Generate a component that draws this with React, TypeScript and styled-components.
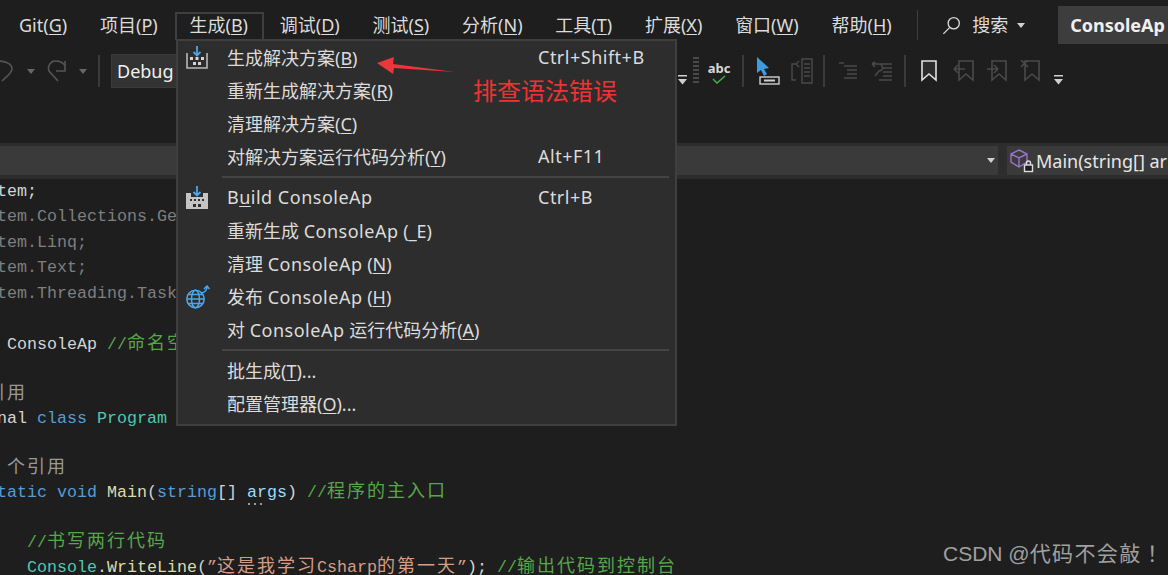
import React from 'react';

import styled, { createGlobalStyle } from 'styled-components';

const UI_FONT = `'Noto Sans', 'Noto Sans CJK SC', sans-serif`;
const CODE_FONT = `'Liberation Mono', 'Noto Sans CJK SC', monospace`;

const MENUS = [
  ['Git(', 'G', ')'],
  ['项目(', 'P', ')'],
  ['生成(', 'B', ')'],
  ['调试(', 'D', ')'],
  ['测试(', 'S', ')'],
  ['分析(', 'N', ')'],
  ['工具(', 'T', ')'],
  ['扩展(', 'X', ')'],
  ['窗口(', 'W', ')'],
  ['帮助(', 'H', ')'],
];

const App: React.FC = () => {
  return (
    <Root>
      <GlobalStyle />
      <MenuBar>
        {MENUS.map(([before, key, after]) => (
          <MenuLabel key={key} $open={key === 'B'}>
            {before}
            <u>{key}</u>
            {after}
          </MenuLabel>
        ))}
        <MenuDivider />
        <SearchBox>
          <svg width="19" height="19" viewBox="0 0 17 17" fill="none" stroke="#d8d8d8" strokeWidth="1.2">
            <circle cx="10.5" cy="6.5" r="5" />
            <path d="M7 10.2L1.2 16" />
          </svg>
          <SearchText>搜索</SearchText>
          <Caret $color="#d0d0d0" />
        </SearchBox>
        <TitleBox>ConsoleAp</TitleBox>
      </MenuBar>

      <Toolbar>
        <ToolGroup>
          <svg width="13" height="26" viewBox="0 0 13 26" fill="none" stroke="#555" strokeWidth="1.6">
            <path d="M-3 3C4 3 12 5 12 11C12 15 5 20 2 23" />
          </svg>
          <Caret $color="#666" $gap={14} />
          <ToolIcon $gap={12} width="22" height="26" viewBox="0 0 22 26" fill="none" stroke="#555" strokeWidth="1.6">
            <path d="M11 23L2 13C0 8 4 3 8 3C12 3 16 4 18 8" />
            <path d="M18 3V13H9" />
          </ToolIcon>
          <Caret $color="#666" $gap={10} />
          <ToolSep $gap={11} />
          <ConfigCombo>Debug</ConfigCombo>
        </ToolGroup>

        <ToolGroup>
          <OverflowIcon />
          <ToolIcon $gap={5} width="8" height="30" viewBox="0 0 8 30" fill="#4a4a4a">
            {[1, 5, 9, 13, 17, 21, 25].map((y) => (
              <rect key={y} x="1" y={y} width="6" height="2" />
            ))}
          </ToolIcon>
          <AbcIcon>
            <AbcText>abc</AbcText>
            <svg width="14" height="9" viewBox="0 0 14 9" fill="none" stroke="#4caf50" strokeWidth="1.4">
              <path d="M1 4l4 4 8-7" />
            </svg>
          </AbcIcon>
          <ToolSep $gap={13} />
          <ToolIcon $gap={12} width="24" height="28" viewBox="0 0 24 28">
            <path d="M1 0l0 16 4-3 3 6 3-2-3-5 5-1z" fill="#3e9be0" />
            <rect x="4" y="20" width="19" height="7" fill="none" stroke="#cfcfcf" strokeWidth="1.4" />
            <rect x="8" y="22.5" width="11" height="2" fill="#cfcfcf" />
          </ToolIcon>
          <ToolIcon $gap={10} width="23" height="26" viewBox="0 0 23 26" fill="none" stroke="#4a4a4a" strokeWidth="1.4">
            <path d="M6 6H2v16h4M6 6l3-3M6 6l3 3" />
            <path d="M12 1h10v24H12zM14 6h6M14 10h6M14 14h6M14 18h6" />
          </ToolIcon>
          <ToolSep $gap={10} />
          <ToolIcon $gap={14} width="19" height="20" viewBox="0 0 19 20" stroke="#4a4a4a" strokeWidth="1.6">
            <path d="M0 2h5M5 5h13M8 9h10M8 13h10M5 17h13" />
          </ToolIcon>
          <ToolIcon $gap={12} width="23" height="21" viewBox="0 0 23 21" fill="none" stroke="#4a4a4a" strokeWidth="1.6">
            <path d="M2 3h7a3 3 0 0 1 0 7L5 15M2 3l3-2M2 3l3 3" />
            <path d="M10 3h12M13 7h9M13 11h9M13 15h9M9 19h13" />
          </ToolIcon>
          <ToolSep $gap={11} />
          <BookmarkIcon $color="#e0e0e0" $gap={15} $fill="#2c2c2c" />
          <BookmarkIcon $color="#4a4a4a" $gap={16} $mark="M-4 9h11M-4 9l4-4M-4 9l4 4" $wide />
          <BookmarkIcon $color="#4a4a4a" $gap={12} $mark="M-4 9h11M7 9l-4-4M7 9l-4 4" $wide />
          <BookmarkIcon $color="#4a4a4a" $gap={12} $mark="M-3 0l7 7M4 0l-7 7" $wide />
          <OverflowIcon $gap={14} />
        </ToolGroup>
      </Toolbar>

      <NavBar>
        <NavCombo $grow>
          <Caret $color="#d0d0d0" />
        </NavCombo>
        <NavCombo>
          <NavIcon width="24" height="24" viewBox="0 0 24 24" fill="none" strokeWidth="1.4">
            <path d="M9 1l8 4v8l-8 5-8-5V5zM1 5l8 4 8-4M9 9v9" stroke="#9a72c9" />
            <rect x="14.5" y="16" width="8" height="6.5" fill="#1e1e1e" stroke="#ddd" />
            <path d="M16.5 16v-2a2 2 0 0 1 4 0v2" stroke="#ddd" />
          </NavIcon>
          <NavText>Main(string[] ar</NavText>
        </NavCombo>
      </NavBar>

      <Editor>
        <Line $h={25}><Dim $bright>tem;</Dim></Line>
        <Line $h={25.5}><Dim>tem.Collections.Ge</Dim></Line>
        <Line $h={25.5}><Dim>tem.Linq;</Dim></Line>
        <Line $h={25.5}><Dim>tem.Text;</Dim></Line>
        <Line $h={25.5}><Dim>tem.Threading.Task</Dim></Line>
        <Line $h={25.5} />
        <Line $h={25.5}>{' '}<Ident>ConsoleAp</Ident> <Comment>//<Cjk>命名空</Cjk></Comment></Line>
        <Line $h={24.5} />
        <Line $h={24.5} $lens $x={-10}>引用</Line>
        <Line $h={25}>nal <Keyword>class</Keyword> <TypeName>Program</TypeName></Line>
        <Line $h={24.5} />
        <Line $h={24} $lens $x={10}>个引用</Line>
        <Line $h={24.500}>
          <Keyword>tatic void</Keyword> <Method>Main</Method>(<Keyword>string</Keyword>[] <Param>args</Param>) <Comment>//<Cjk>程序的主入口</Cjk></Comment>
        </Line>
        <Line $h={25.5} />
        <Line $h={25.5} $x={30}><Comment>//<Cjk>书写两行代码</Cjk></Comment></Line>
        <Line $h={25} $x={30}>
          <TypeName>Console</TypeName>.<Method>WriteLine</Method>(<Str>”<Cjk>这是我学习</Cjk>Csharp<Cjk>的第一天</Cjk>”</Str>); <Comment>//<Cjk>输出代码到控制台</Cjk></Comment>
        </Line>
      </Editor>

      <MenuPanel>
        <MenuItem>
          <ItemIcon><BuildIcon /></ItemIcon>
          <ItemLabel>生成解决方案(<u>B</u>)</ItemLabel>
          <Shortcut>Ctrl+Shift+B</Shortcut>
        </MenuItem>
        <MenuItem>
          <ItemIcon />
          <ItemLabel>重新生成解决方案(<u>R</u>)</ItemLabel>
        </MenuItem>
        <MenuItem>
          <ItemIcon />
          <ItemLabel>清理解决方案(<u>C</u>)</ItemLabel>
        </MenuItem>
        <MenuItem>
          <ItemIcon />
          <ItemLabel>对解决方案运行代码分析(<u>Y</u>)</ItemLabel>
          <Shortcut>Alt+F11</Shortcut>
        </MenuItem>
        <Separator />
        <MenuItem>
          <ItemIcon><BuildIcon $solid /></ItemIcon>
          <ItemLabel>
            <Latin>B<u>u</u>ild ConsoleAp</Latin>
          </ItemLabel>
          <Shortcut>Ctrl+B</Shortcut>
        </MenuItem>
        <MenuItem>
          <ItemIcon />
          <ItemLabel>重新生成 <Latin>ConsoleAp</Latin> (<u>_</u>E)</ItemLabel>
        </MenuItem>
        <MenuItem>
          <ItemIcon />
          <ItemLabel>清理 <Latin>ConsoleAp</Latin> (<u>N</u>)</ItemLabel>
        </MenuItem>
        <MenuItem>
          <ItemIcon>
            <svg width="24" height="24" viewBox="0 0 24 24" fill="none" stroke="#4ea6ea" strokeWidth="1.5">
              <circle cx="9.5" cy="14" r="8.7" />
              <ellipse cx="9.5" cy="14" rx="4" ry="8.7" />
              <path d="M1 14h17M2.500 9.500h14M2.500 18.500h14" />
              <path d="M16 8c3-1 5-3 5-6M18 4l3-3 2.500 3" />
            </svg>
          </ItemIcon>
          <ItemLabel>发布 <Latin>ConsoleAp</Latin> (<u>H</u>)</ItemLabel>
        </MenuItem>
        <MenuItem>
          <ItemIcon />
          <ItemLabel>对 <Latin>ConsoleAp</Latin> 运行代码分析(<u>A</u>)</ItemLabel>
        </MenuItem>
        <Separator />
        <MenuItem>
          <ItemIcon />
          <ItemLabel>批生成(<u>T</u>)...</ItemLabel>
        </MenuItem>
        <MenuItem>
          <ItemIcon />
          <ItemLabel>配置管理器(<u>O</u>)...</ItemLabel>
        </MenuItem>
      </MenuPanel>

      <ArrowMark width="80" height="20" viewBox="0 0 80 20">
        <path d="M0 6L17 0l-1 7 62 8-61-4-1 6z" fill="#f1343a" />
      </ArrowMark>
      <Annotation>排查语法错误</Annotation>
      <Watermark>CSDN @<WatermarkCjk>代码不会敲！</WatermarkCjk></Watermark>
    </Root>
  );
};
export default App;

const BuildIcon: React.FC<{ $solid?: boolean }> = ({ $solid }) => (
  <svg width="22" height="24" viewBox="0 0 22 24">
    <path d="M11 0v9M7.5 6l3.5 3.5L14.500 6" fill="none" stroke="#4ea6ea" strokeWidth="1.8" />
    {$solid ? (
      <>
        <path d="M0 7h5v4h12V7h5v16H0z" fill="#c4c4c4" />
        <path d="M4 13h2v2H4zM8 13h2v2H8zM12 13h2v2h-2zM16 13h2v2h-2zM7 18h3v3H7zM12 18h3v3h-3z" fill="#2d2d2d" />
      </>
    ) : (
      <>
        <path d="M1 7v15h20V7" fill="none" stroke="#b8b8b8" strokeWidth="1.6" />
        <path d="M4 11h3v3H4zM9.500 11h3v3h-3zM15 11h3v3h-3zM7 16h3v3H7zM12 16h3v3h-3z" fill="#d4d4d4" />
      </>
    )}
  </svg>
);

const OverflowIcon: React.FC<{ $gap?: number }> = ({ $gap = 0 }) => (
  <OverflowSvg $gap={$gap} width="9" height="10" viewBox="0 0 9 10">
    <rect x="0" y="0" width="9" height="1.500" fill="#d0d0d0" />
    <path d="M0 4h9L4.500 9.500z" fill="#d0d0d0" />
  </OverflowSvg>
);

const BookmarkIcon: React.FC<{
  $color: string;
  $gap: number;
  $fill?: string;
  $mark?: string;
  $wide?: boolean;
}> = ({ $color, $gap, $fill = 'none', $mark, $wide }) => (
  <ToolIcon
    $gap={$gap}
    width={$wide ? 21 : 16}
    height="22"
    viewBox={$wide ? '-5 0 21 22' : '0 0 16 22'}
    fill="none"
    stroke={$color}
    strokeWidth="1.6"
  >
    <path d="M1 1h14v19l-7-6-7 6z" fill={$fill} />
    {$mark && <path d={$mark} />}
  </ToolIcon>
);

/* ===== styled-components ===== */
const GlobalStyle = createGlobalStyle`
  html, body {
    margin: 0;
    padding: 0;
    background: #1e1e1e;
  }
  u {
    text-underline-offset: 2px;
    text-decoration-thickness: 1px;
  }
`;

const Root = styled.div`
  position: relative;
  width: 1168px;
  height: 575px;
  overflow: hidden;
  background: #1e1e1e;
  font-family: ${UI_FONT};
  color: #dcdcdc;
`;

const MenuBar = styled.div`
  height: 50px;
  display: flex;
  align-items: center;
  padding-left: 19px;
  font-size: 18px;
  white-space: nowrap;
`;

const MenuLabel = styled.span<{ $open?: boolean }>`
  position: relative;
  margin-right: 32.8px;
  line-height: 24px;

  ${(p) =>
    p.$open &&
    `
    margin-left: -1px;
    margin-right: 31.8px;

    &:before {
      content: '';
      position: absolute;
      left: -14px;
      right: -16px;
      top: -1px;
      height: 26px;
      border: 2px solid #3f3f41;
      border-bottom: 0;
    }
  `}
`;

const MenuDivider = styled.div`
  width: 1px;
  height: 30px;
  margin: 0 24px 0 -7px;
  background: #3f3f41;
`;

const SearchBox = styled.div`
  display: flex;
  align-items: center;
  margin-right: 33px;
`;

const SearchText = styled.span`
  margin: 0 9px 0 11px;
  line-height: 24px;
`;

const TitleBox = styled.div`
  height: 38px;
  width: 130px;
  padding-left: 12px;
  display: flex;
  align-items: center;
  font-weight: 700;
  background: #3d3d3d;
  color: #f0f0f0;
`;

const Caret = styled.span<{ $color: string; $gap?: number }>`
  width: 0;
  height: 0;
  margin-left: ${(p) => p.$gap ?? 0}px;
  border-left: 4.500px solid transparent;
  border-right: 4.500px solid transparent;
  border-top: 5px solid ${(p) => p.$color};
`;

const Toolbar = styled.div`
  height: 38px;
  margin-top: 2px;
  display: flex;
  justify-content: space-between;
  align-items: center;
  padding-right: 105px;
`;

const ToolGroup = styled.div`
  display: flex;
  align-items: center;
`;

const ToolIcon = styled.svg<{ $gap: number }>`
  margin-left: ${(p) => p.$gap}px;
  flex-shrink: 0;
`;

const ToolSep = styled.div<{ $gap: number }>`
  width: 2px;
  height: 32px;
  margin-left: ${(p) => p.$gap}px;
  background: #3a3a3a;
`;

const ConfigCombo = styled.div`
  width: 200px;
  height: 34px;
  margin-left: 11px;
  padding-left: 5px;
  box-sizing: border-box;
  display: flex;
  align-items: center;
  background: #333333;
  border: 1px solid #3a3a3a;
  font-size: 18px;
  color: #f0f0f0;
`;

const OverflowSvg = styled.svg<{ $gap: number }>`
  margin-left: ${(p) => p.$gap}px;
  align-self: flex-end;
  margin-bottom: 2px;
`;

const AbcIcon = styled.div`
  width: 20px;
  margin-left: 9px;
  padding-top: 2px;
  display: flex;
  flex-direction: column;
  align-items: center;
`;

const AbcText = styled.span`
  font-size: 13px;
  line-height: 14px;
  font-weight: 700;
  color: #d8d8d8;
`;

const NavBar = styled.div`
  height: 36px;
  margin-top: 53px;
  padding: 3px 0 4px;
  box-sizing: border-box;
  display: flex;
  gap: 9px;
  background: #2d2d2d;
`;

const NavCombo = styled.div<{ $grow?: boolean }>`
  flex: ${(p) => (p.$grow ? '0 0 998px' : '1')};
  min-width: 0;
  padding: ${(p) => (p.$grow ? '0 3px 0 0' : '0 0 0 3px')};
  box-sizing: border-box;
  display: flex;
  align-items: center;
  justify-content: ${(p) => (p.$grow ? 'flex-end' : 'flex-start')};
  background: #3a3a3a;
  overflow: hidden;
  white-space: nowrap;
`;

const NavIcon = styled.svg`
  flex-shrink: 0;
`;

const NavText = styled.span`
  margin-left: 2px;
  font-size: 18px;
  color: #e6e6e6;
`;

const Editor = styled.div`
  margin-left: -3px;
  font-family: ${CODE_FONT};
  font-size: 16.670px;
  color: #d4d4d4;
  white-space: pre;
`;

const Line = styled.div<{ $h: number; $x?: number; $lens?: boolean }>`
  height: ${(p) => p.$h}px;
  line-height: ${(p) => p.$h}px;
  margin-left: ${(p) => p.$x ?? 0}px;
  ${(p) => p.$lens && 'font-size: 18px; letter-spacing: 2px; color: #999999;'}
`;

const Dim = styled.span<{ $bright?: boolean }>`
  color: ${(p) => (p.$bright ? '#d4d4d4' : '#7f7f7f')};
`;

const Ident = styled.span`
  color: #d4d4d4;
`;

const Keyword = styled.span`
  color: #569cd6;
`;

const TypeName = styled.span`
  color: #4ec9b0;
`;

const Method = styled.span`
  color: #dcdcaa;
`;

const Param = styled.span`
  color: #9cdcfe;
  position: relative;

  &:after {
    content: '';
    position: absolute;
    left: 1px;
    bottom: -3px;
    width: 14px;
    height: 2px;
    background: repeating-linear-gradient(90deg, #9a9a9a 0 2px, transparent 2px 6px);
  }
`;

const Comment = styled.span`
  color: #57a64a;
`;

const Str = styled.span`
  color: #d69d85;
`;

const Cjk = styled.span`
  font-size: 18px;
  letter-spacing: 2px;
`;

const MenuPanel = styled.div`
  position: absolute;
  left: 176px;
  top: 39px;
  width: 501px;
  height: 387px;
  box-sizing: border-box;
  border: 2px solid #3f3f41;
  background: #2d2d2d;
  font-size: 18px;
`;

const MenuItem = styled.div`
  height: 33px;
  display: flex;
  align-items: center;
  white-space: nowrap;
  color: #dcdcdc;
`;

const ItemIcon = styled.div`
  width: 49px;
  padding-left: 8px;
  box-sizing: border-box;
  display: flex;
  align-items: center;
`;

const ItemLabel = styled.span`
  width: 311px;
  padding-bottom: 1px;
`;

const Latin = styled.span`
  letter-spacing: 0.5px;
`;

const Shortcut = styled.span`
  padding-bottom: 1px;
  letter-spacing: 0.5px;
  color: #dcdcdc;
`;

const Separator = styled.div`
  height: 2px;
  margin: 3px 6px 3px 44px;
  background: #444446;
`;

const ArrowMark = styled.svg`
  position: absolute;
  left: 377px;
  top: 57px;
`;

const Annotation = styled.div`
  position: absolute;
  left: 473px;
  top: 74px;
  font-size: 24px;
  line-height: 34px;
  color: #ee3333;
`;

const Watermark = styled.div`
  position: absolute;
  left: 943px;
  top: 540px;
  font-family: 'Liberation Sans', 'Noto Sans CJK JP', sans-serif;
  font-size: 21px;
  line-height: 28px;
  color: #a0a0a0;
`;

const WatermarkCjk = styled.span`
  letter-spacing: 1.4px;
`;
